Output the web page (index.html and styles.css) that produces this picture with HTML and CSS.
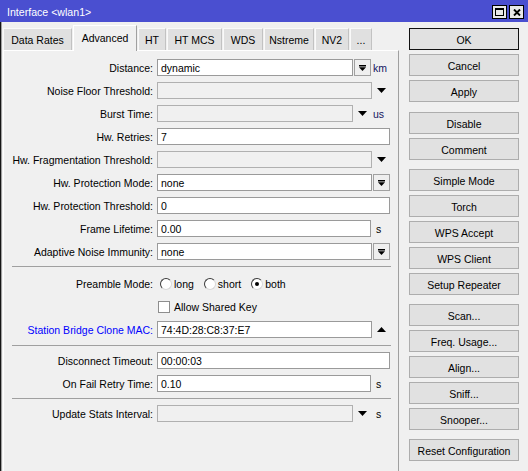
FILE: index.html
```html
<!DOCTYPE html>
<html>
<head>
<meta charset="utf-8">
<title>Interface &lt;wlan1&gt;</title>
<link rel="stylesheet" href="styles.css">
</head>
<body>
<div class="window">
  <div class="titlebar">
    <span class="title">Interface &lt;wlan1&gt;</span>
    <div class="tb-btns">
      <span class="tb-btn"><svg width="9" height="8" viewBox="0 0 9 8"><rect x="0.5" y="0.5" width="8" height="7" fill="none" stroke="#000"/><rect x="0" y="0" width="9" height="2" fill="#000"/></svg></span>
      <span class="tb-btn"><svg width="8" height="7" viewBox="0 0 8 7"><path d="M1 0.5 L7 6.5 M7 0.5 L1 6.5" stroke="#000" stroke-width="1.9" fill="none"/></svg></span>
    </div>
  </div>
  <div class="body">
    <div class="main">
      <div class="tabs">
        <div class="tab w-dr">Data Rates</div>
        <div class="tab active w-adv">Advanced</div>
        <div class="tab w-ht">HT</div>
        <div class="tab w-htmcs">HT MCS</div>
        <div class="tab w-wds">WDS</div>
        <div class="tab w-ns">Nstreme</div>
        <div class="tab w-nv2">NV2</div>
        <div class="tab w-more">...</div>
      </div>
      <div class="panel">
        <div class="row">
          <div class="label">Distance:</div>
          <div class="field">
            <div class="input">dynamic</div>
            <div class="dbtn"><svg width="7" height="6" viewBox="0 0 7 6"><rect x="0" y="0" width="7" height="1.5" fill="#000"/><path d="M0 2.2 H7 L3.5 6 Z" fill="#000"/></svg></div>
            <div class="unit u-km">km</div>
          </div>
        </div>
        <div class="row">
          <div class="label">Noise Floor Threshold:</div>
          <div class="field">
            <div class="input dis"></div>
            <div class="arr"><svg width="9" height="5" viewBox="0 0 9 5"><path d="M0 0 H9 L4.5 5 Z" fill="#000"/></svg></div>
          </div>
        </div>
        <div class="row">
          <div class="label">Burst Time:</div>
          <div class="field">
            <div class="input dis"></div>
            <div class="arr2"><svg width="9" height="5" viewBox="0 0 9 5"><path d="M0 0 H9 L4.5 5 Z" fill="#000"/></svg></div>
            <div class="unit u-us">us</div>
          </div>
        </div>
        <div class="row">
          <div class="label">Hw. Retries:</div>
          <div class="field"><div class="input">7</div></div>
        </div>
        <div class="row">
          <div class="label">Hw. Fragmentation Threshold:</div>
          <div class="field">
            <div class="input dis"></div>
            <div class="arr"><svg width="9" height="5" viewBox="0 0 9 5"><path d="M0 0 H9 L4.5 5 Z" fill="#000"/></svg></div>
          </div>
        </div>
        <div class="row">
          <div class="label">Hw. Protection Mode:</div>
          <div class="field">
            <div class="input">none</div>
            <div class="dbtn"><svg width="7" height="6" viewBox="0 0 7 6"><rect x="0" y="0" width="7" height="1.5" fill="#000"/><path d="M0 2.2 H7 L3.5 6 Z" fill="#000"/></svg></div>
          </div>
        </div>
        <div class="row">
          <div class="label">Hw. Protection Threshold:</div>
          <div class="field"><div class="input">0</div></div>
        </div>
        <div class="row">
          <div class="label">Frame Lifetime:</div>
          <div class="field">
            <div class="input">0.00</div>
            <div class="unit u-s">s</div>
          </div>
        </div>
        <div class="row">
          <div class="label">Adaptive Noise Immunity:</div>
          <div class="field">
            <div class="input">none</div>
            <div class="dbtn"><svg width="7" height="6" viewBox="0 0 7 6"><rect x="0" y="0" width="7" height="1.5" fill="#000"/><path d="M0 2.2 H7 L3.5 6 Z" fill="#000"/></svg></div>
          </div>
        </div>
        <div class="sep"></div>
        <div class="row preamble">
          <div class="label">Preamble Mode:</div>
          <div class="field radios">
            <span class="radio first"></span><span class="rlabel">long</span>
            <span class="radio"></span><span class="rlabel">short</span>
            <span class="radio checked"></span><span class="rlabel">both</span>
          </div>
        </div>
        <div class="row">
          <div class="label"></div>
          <div class="field">
            <span class="check"></span><span class="clabel">Allow Shared Key</span>
          </div>
        </div>
        <div class="row">
          <div class="label blue">Station Bridge Clone MAC:</div>
          <div class="field">
            <div class="input">74:4D:28:C8:37:E7</div>
            <div class="arr"><svg width="9" height="5" viewBox="0 0 9 5"><path d="M0 5 H9 L4.5 0 Z" fill="#000"/></svg></div>
          </div>
        </div>
        <div class="sep s2"></div>
        <div class="row">
          <div class="label">Disconnect Timeout:</div>
          <div class="field"><div class="input">00:00:03</div></div>
        </div>
        <div class="row">
          <div class="label">On Fail Retry Time:</div>
          <div class="field">
            <div class="input">0.10</div>
            <div class="unit u-s">s</div>
          </div>
        </div>
        <div class="sep"></div>
        <div class="row">
          <div class="label">Update Stats Interval:</div>
          <div class="field">
            <div class="input dis"></div>
            <div class="arr2"><svg width="9" height="5" viewBox="0 0 9 5"><path d="M0 0 H9 L4.5 5 Z" fill="#000"/></svg></div>
            <div class="unit u-s2">s</div>
          </div>
        </div>
      </div>
    </div>
    <div class="buttons">
      <div class="btn def">OK</div>
      <div class="btn">Cancel</div>
      <div class="btn">Apply</div>
      <div class="btn g1">Disable</div>
      <div class="btn">Comment</div>
      <div class="btn g">Simple Mode</div>
      <div class="btn">Torch</div>
      <div class="btn">WPS Accept</div>
      <div class="btn">WPS Client</div>
      <div class="btn">Setup Repeater</div>
      <div class="btn g">Scan...</div>
      <div class="btn">Freq. Usage...</div>
      <div class="btn">Align...</div>
      <div class="btn">Sniff...</div>
      <div class="btn">Snooper...</div>
      <div class="btn g">Reset Configuration</div>
    </div>
  </div>
</div>
</body>
</html>
```

FILE: styles.css
```css
* { box-sizing: border-box; }
html, body { margin: 0; padding: 0; }
body {
  width: 528px;
  height: 471px;
  overflow: hidden;
  background: #f0f0f0;
  font-family: "Liberation Sans", Arial, sans-serif;
  font-size: 10.5px;
  color: #000;
}
.window {
  width: 528px;
  height: 471px;
  display: flex;
  flex-direction: column;
  background: #f0f0f0;
}
.titlebar {
  height: 22px;
  flex: none;
  background: #4a4fd0;
  color: #fff;
  display: flex;
  align-items: center;
  padding: 0 4px 0 7px;
}
.title { flex: 1; padding-top: 2px; font-size: 10.6px; }
.tb-btns { display: flex; gap: 2px; margin-top: 2px; }
.tb-btn {
  width: 15px;
  height: 14px;
  background: #e8e8e8;
  border: 1px solid #000;
  display: flex;
  align-items: center;
  justify-content: center;
}
.body {
  flex: 1;
  display: flex;
  border-left: 1px solid #151515;
  box-shadow: inset 1px 0 0 #a0a0a0;
  padding: 3px 0 0 2px;
  min-height: 0;
}
.main {
  width: 396px;
  flex: none;
  display: flex;
  flex-direction: column;
}
.tabs {
  display: flex;
  gap: 1px;
  height: 25px;
  align-items: flex-end;
  position: relative;
  z-index: 1;
  flex: none;
}
.tab {
  height: 22px;
  background: #e0e0e0;
  border-top: 1px solid #f9f9f9;
  border-left: 1px solid #f9f9f9;
  border-right: 1px solid #c2c2c2;
  display: flex;
  align-items: center;
  justify-content: center;
  padding-top: 1px;
  white-space: nowrap;
}
.tab.active {
  height: 26px;
  margin-bottom: -1px;
  background: #f0f0f0;
  border-top-color: #fff;
  border-left-color: #fff;
  border-right-color: #a0a0a0;
  padding-top: 0;
  padding-bottom: 2px;
}
.w-dr { width: 69px; }
.w-adv { width: 64px; }
.w-ht { width: 28px; }
.w-htmcs { width: 55px; }
.w-wds { width: 40px; }
.w-ns { width: 50px; }
.w-nv2 { width: 34px; }
.w-more { width: 22px; }

.panel {
  flex: 1;
  background: #f0f0f0;
  border-top: 1px solid #fff;
  border-left: 1px solid #fff;
  border-right: 1px solid #a0a0a0;
  padding: 8px 0 0 0;
  display: flex;
  flex-direction: column;
  gap: 6px;
}
.row {
  display: grid;
  grid-template-columns: 149px 233px;
  column-gap: 4px;
  height: 17px;
  align-items: center;
  flex: none;
}
.label { text-align: right; white-space: nowrap; }
.label.blue { color: #0000ff; }
.field {
  display: flex;
  align-items: center;
  height: 17px;
}
.input {
  flex: 1;
  min-width: 0;
  height: 17px;
  background: #fff;
  border: 1px solid #9a9a9a;
  padding: 0 3px;
  display: flex;
  align-items: center;
  white-space: nowrap;
}
.input.dis {
  background: #f0f0f0;
  border-color: #b0b0b0;
}
.dbtn {
  width: 17px;
  height: 17px;
  margin-left: 1px;
  flex: none;
  background: #efefef;
  border: 1px solid #a0a0a0;
  display: flex;
  align-items: center;
  justify-content: center;
}
.arr {
  width: 18px;
  flex: none;
  display: flex;
  justify-content: center;
  padding-left: 1px;
}
.arr2 {
  width: 19px;
  flex: none;
  display: flex;
  justify-content: center;
}
.unit { flex: none; color: #141460; white-space: nowrap; }
.u-km { width: 19px; padding-left: 2px; }
.u-us { width: 18px; padding-left: 1px; }
.u-s { width: 19px; padding-left: 5px; color: #000; }
.u-s2 { width: 18px; padding-left: 4px; color: #000; }

.sep {
  height: 1px;
  flex: none;
  background: #a0a0a0;
  margin: 0 7px 0 8px;
}
.sep.s2 { margin-top: 1px; }
.preamble { margin-top: 2px; }

.radio {
  width: 12px;
  height: 12px;
  flex: none;
  border-radius: 50%;
  background: #fff;
  border: 1px solid;
  border-color: #3a3a3a #d8d8d8 #d8d8d8 #3a3a3a;
  margin-left: 10px;
  position: relative;
}
.radio.first { margin-left: 3px; }
.radio.checked::after {
  content: "";
  position: absolute;
  left: 3px;
  top: 3px;
  width: 4px;
  height: 4px;
  border-radius: 50%;
  background: #000;
}
.rlabel { margin-left: 2px; }
.check {
  width: 12px;
  height: 12px;
  flex: none;
  margin-left: 1px;
  background: #fff;
  border: 1px solid #8e8e8e;
}
.clabel { margin-left: 4px; }

.buttons {
  width: 110px;
  flex: none;
  margin-left: 10px;
  padding-top: 3px;
  display: flex;
  flex-direction: column;
  gap: 4px;
}
.btn {
  height: 22px;
  flex: none;
  background: #e1e1e1;
  border: 1px solid #adadad;
  display: flex;
  align-items: center;
  justify-content: center;
  padding-top: 1px;
  white-space: nowrap;
}
.btn.def { border-color: #111; }
.btn.g1 { margin-top: 6px; }
.btn.g { margin-top: 5px; }
```
